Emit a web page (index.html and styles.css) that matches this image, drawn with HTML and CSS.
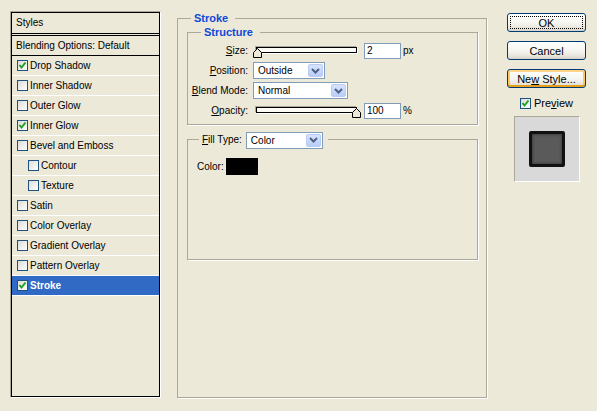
FILE: index.html
```html
<html lang="en">
<head>
    <meta charset="UTF-8">
    <title>Layer Style</title>
    <link rel="stylesheet" href="styles.css">
</head>
<body>
    <div class="dialog">
        <!-- left list of effects -->
        <div class="styles-panel">
            <div class="panel-inner">
                <div class="panel-head">Styles</div>
                <ul class="style-list">
                    <li class="blend-row">Blending Options: Default</li>
                    <li><span class="check"><svg width="9" height="9" viewBox="0 0 9 9"><path d="M1.5 4 L3.5 6.5 L7.5 1.5" fill="none" stroke="#21a121" stroke-width="2"/></svg></span>Drop Shadow</li>
                    <li><span class="check"></span>Inner Shadow</li>
                    <li><span class="check"></span>Outer Glow</li>
                    <li><span class="check"><svg width="9" height="9" viewBox="0 0 9 9"><path d="M1.5 4 L3.5 6.5 L7.5 1.5" fill="none" stroke="#21a121" stroke-width="2"/></svg></span>Inner Glow</li>
                    <li><span class="check"></span>Bevel and Emboss</li>
                    <li class="sub"><span class="check"></span>Contour</li>
                    <li class="sub"><span class="check"></span>Texture</li>
                    <li><span class="check"></span>Satin</li>
                    <li><span class="check"></span>Color Overlay</li>
                    <li><span class="check"></span>Gradient Overlay</li>
                    <li><span class="check"></span>Pattern Overlay</li>
                    <li class="selected"><span class="check"><svg width="9" height="9" viewBox="0 0 9 9"><path d="M1.5 4 L3.5 6.5 L7.5 1.5" fill="none" stroke="#21a121" stroke-width="2"/></svg></span>Stroke</li>
                </ul>
            </div>
        </div>

        <!-- stroke settings -->
        <fieldset class="group main-group">
            <legend>Stroke</legend>
            <fieldset class="group structure">
                <legend>Structure</legend>
                <div class="form-grid">
                    <label><u>S</u>ize:</label>
                    <div class="ctrl">
                        <div class="slider">
                            <div class="track"></div>
                            <svg class="thumb thumb-min" width="9" height="10" viewBox="0 0 9 10"><path d="M0.5 9.5 V4.5 L4.5 0.5 L8.5 4.5 V9.5 Z" fill="#ece9d8" stroke="#000"/></svg>
                        </div>
                        <input class="num" type="text" value="2">
                        <span class="unit">px</span>
                    </div>

                    <label><u>P</u>osition:</label>
                    <div class="ctrl">
                        <div class="select sel-position">
                            <span class="sel-text">Outside</span>
                            <span class="drop"><svg width="9" height="6" viewBox="0 0 9 6"><path d="M1 1 L4.5 4.5 L8 1" fill="none" stroke="#4d6185" stroke-width="2"/></svg></span>
                        </div>
                    </div>

                    <label><u>B</u>lend Mode:</label>
                    <div class="ctrl">
                        <div class="select sel-blend">
                            <span class="sel-text">Normal</span>
                            <span class="drop"><svg width="9" height="6" viewBox="0 0 9 6"><path d="M1 1 L4.5 4.5 L8 1" fill="none" stroke="#4d6185" stroke-width="2"/></svg></span>
                        </div>
                    </div>

                    <label><u>O</u>pacity:</label>
                    <div class="ctrl">
                        <div class="slider">
                            <div class="track"></div>
                            <svg class="thumb thumb-max" width="9" height="10" viewBox="0 0 9 10"><path d="M0.5 9.5 V4.5 L4.5 0.5 L8.5 4.5 V9.5 Z" fill="#ece9d8" stroke="#000"/></svg>
                        </div>
                        <input class="num" type="text" value="100">
                        <span class="unit">%</span>
                    </div>
                </div>
            </fieldset>

            <fieldset class="group fill">
                <legend><u>F</u>ill Type:<span class="select sel-fill">
                    <span class="sel-text">Color</span>
                    <span class="drop"><svg width="9" height="6" viewBox="0 0 9 6"><path d="M1 1 L4.5 4.5 L8 1" fill="none" stroke="#4d6185" stroke-width="2"/></svg></span>
                </span></legend>
                <div class="color-row">Color:<span class="color-swatch"></span></div>
            </fieldset>
        </fieldset>

        <!-- dialog buttons -->
        <div class="side">
            <button class="btn focus">OK</button>
            <button class="btn">Cancel</button>
            <button class="btn hot">Ne<u>w</u> Style...</button>
            <div class="preview"><span class="check"><svg width="9" height="9" viewBox="0 0 9 9"><path d="M1.5 4 L3.5 6.5 L7.5 1.5" fill="none" stroke="#21a121" stroke-width="2"/></svg></span>Pre<u>v</u>iew</div>
            <div class="preview-box"><div class="sample"></div></div>
        </div>
    </div>
</body>
</html>
```

FILE: styles.css
```css
* {
    box-sizing: border-box;
}
body {
    margin: 0;
    background: #ece9d8;
    font-family: "Liberation Sans", Arial, sans-serif;
    font-size: 10px;
    color: #000;
}
.dialog {
    display: flex;
    align-items: flex-start;
    width: 597px;
    height: 411px;
    padding: 11px 0 0 10px;
}

/* left effects list */
.styles-panel {
    width: 151px;
    height: 387px;
    border: 1px solid;
    border-color: #aca899 #fff #fff #aca899;
}
.panel-inner {
    height: 100%;
    border: 1px solid #000;
}
.panel-head {
    height: 21px;
    line-height: 20px;
    padding-left: 4px;
    border-bottom: 1px solid #000;
}
.style-list {
    list-style: none;
    margin: 1px 0 0;
    padding: 0;
    border-top: 1px solid #000;
}
.style-list li {
    display: flex;
    align-items: center;
    height: 20px;
    padding-left: 5px;
    border-bottom: 1px solid #fff;
}
.style-list li.blend-row {
    padding-left: 4px;
    border-bottom-color: #000;
}
.style-list li.sub {
    padding-left: 16px;
}
.style-list li.selected {
    background: #316ac5;
    color: #fff;
    font-weight: bold;
}
.check {
    flex: none;
    display: inline-flex;
    width: 11px;
    height: 11px;
    margin-right: 2px;
    border: 1px solid #1c5180;
    background: linear-gradient(135deg, #dcdcd7, #fff);
}

/* group boxes */
.group {
    margin: 0;
    min-width: 0;
    border: 1px solid #aca899;
    box-shadow: 1px 1px 0 #fff;
}
.group legend {
    padding: 0 7px 0 3px;
    color: #1048d8;
    font-weight: bold;
    font-size: 11px;
    line-height: 12px;
}
.main-group {
    width: 310px;
    height: 386px;
    margin: 1px 0 0 16px;
    padding: 2px 8px 0 9px;
}
.main-group > legend {
    margin-left: 4px;
}
.structure {
    width: 291px;
    padding: 4px 0 5px 0;
}
.structure legend {
    margin-left: 13px;
}
.form-grid {
    display: grid;
    grid-template-columns: 60px auto;
    grid-auto-rows: 17px;
    column-gap: 5px;
    row-gap: 3px;
    align-items: center;
}
.form-grid label {
    text-align: right;
}
.ctrl {
    display: flex;
    align-items: center;
}
.slider {
    position: relative;
    width: 104px;
    height: 17px;
}
.track {
    width: 101px;
    height: 6px;
    margin: 5px 0 0 3px;
    border: 1px solid #000;
    background: #fbfaf4;
    box-shadow: -1px -1px 0 #aca899, 1px 1px 0 #fff;
}
.thumb {
    position: absolute;
    top: 6px;
}
.thumb-min {
    left: 0;
}
.thumb-max {
    left: 99px;
}
.num {
    width: 37px;
    height: 16px;
    margin-left: 7px;
    padding: 0 2px;
    border: 1px solid #7f9db9;
    font: 10px "Liberation Sans", Arial, sans-serif;
    outline: none;
}
.unit {
    margin-left: 2px;
}
.select {
    display: inline-flex;
    align-items: center;
    height: 17px;
    padding: 1px;
    border: 1px solid #7f9db9;
    background: #fff;
    vertical-align: middle;
}
.sel-text {
    flex: 1;
    padding-left: 3px;
}
.drop {
    display: flex;
    align-items: center;
    justify-content: center;
    width: 15px;
    height: 13px;
    border: 1px solid #b9cbf3;
    border-radius: 2px;
    background: linear-gradient(#d8e3fd, #b9cdf8);
}
.sel-position {
    width: 72px;
}
.sel-blend {
    width: 95px;
}
.sel-fill {
    width: 77px;
    margin-left: 4px;
}
.fill {
    width: 291px;
    margin-top: 6px;
    padding: 9px 0 84px 9px;
}
.fill legend {
    margin-left: 2px;
    padding: 0 5px 0 3px;
    color: #000;
    font-weight: normal;
    font-size: 10px;
    line-height: 17px;
}
.color-row {
    display: flex;
    align-items: center;
    height: 17px;
}
.color-swatch {
    width: 32px;
    height: 17px;
    margin-left: 2px;
    background: #000;
}

/* buttons column */
.side {
    display: flex;
    flex-direction: column;
    align-items: center;
    gap: 9px;
    width: 79px;
    margin: 2px 0 0 20px;
}
.btn {
    width: 79px;
    height: 19px;
    padding: 0;
    border: 1px solid #003c74;
    border-radius: 3px;
    background: linear-gradient(#fff, #f4f4f0 55%, #e6e3da 85%, #d6d0c5);
    font: 11px "Liberation Sans", Arial, sans-serif;
    color: #000;
}
.btn.focus {
    outline: 1px dotted #000;
    outline-offset: -4px;
}
.btn.hot {
    box-shadow: inset 0 2px 0 #ffd486, inset 0 -2px 0 #e5a01a, inset 2px 0 0 #fbc761, inset -2px 0 0 #fbc761;
}
.preview {
    display: flex;
    align-items: center;
    height: 12px;
    font-size: 11px;
}
.preview .check {
    margin-right: 3px;
}
.preview-box {
    display: flex;
    align-items: center;
    justify-content: center;
    width: 66px;
    height: 66px;
    margin-top: -2px;
    border: 1px solid;
    border-color: #aca899 #fff #fff #aca899;
    background: #d9d9d9;
}
.sample {
    width: 36px;
    height: 36px;
    border: 3px solid #111;
    border-radius: 2px;
    background: #5a5a5a;
    box-shadow: inset 0 0 3px #2a2a2a;
}
```
